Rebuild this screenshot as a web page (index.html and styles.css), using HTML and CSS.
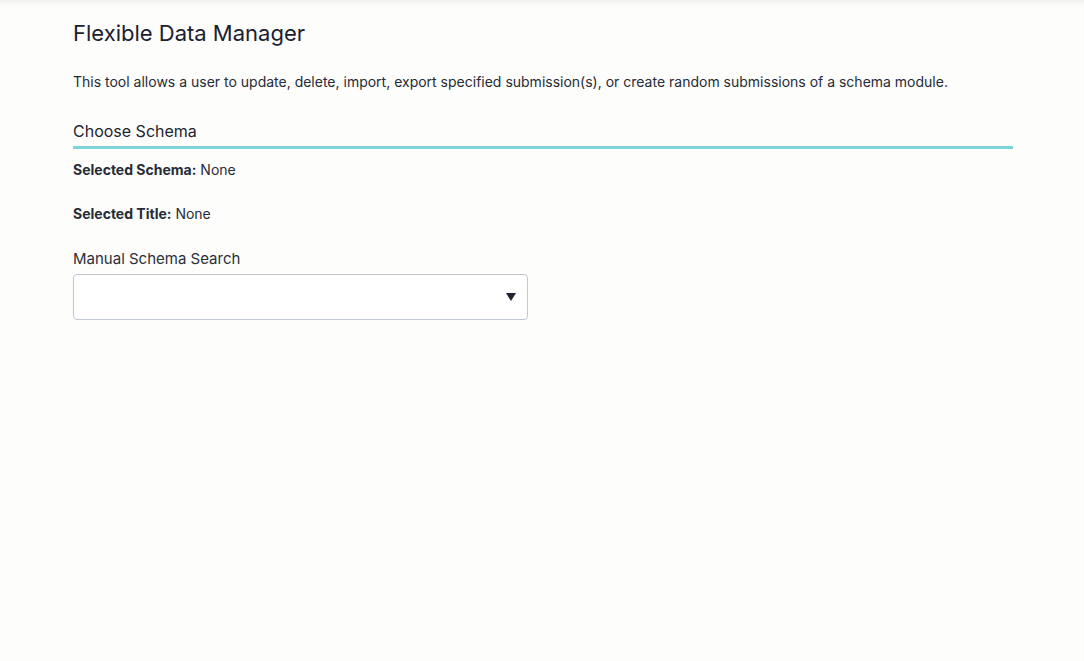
FILE: index.html
```html
<!DOCTYPE html>
<html>
<head>
<meta charset="utf-8">
<link rel="stylesheet" href="styles.css">
</head>
<body>
<div class="page">
  <main class="content">
    <h1 class="title">Flexible Data Manager</h1>
    <p class="desc">This tool allows a user to update, delete, import, export specified submission(s), or create random submissions of a schema module.</p>
    <h2 class="section">Choose Schema</h2>
    <p class="info"><b>Selected Schema:</b> None</p>
    <p class="info"><b>Selected Title:</b> None</p>
    <label class="field-label">Manual Schema Search</label>
    <div class="select">
      <svg class="caret" width="10" height="8" viewBox="0 0 10 8"><path d="M0 0H10L5 8Z" fill="#1f2430"/></svg>
    </div>
  </main>
</div>
</body>
</html>
```
FILE: styles.css
```css
html, body {
  margin: 0;
  padding: 0;
  height: 100%;
  background: #fdfdfc;
}
body {
  font-family: Inter, "Noto Sans", sans-serif;
  color: #222733;
}
.page {
  height: 100%;
  box-shadow: inset 0 6px 6px -4px rgba(0,0,0,0.06);
  border-top: 1px solid #eef0f2;
  box-sizing: border-box;
}
.content {
  width: 940px;
  margin-left: 73px;
  padding-top: 19px;
}
.title {
  margin: 0;
  font-size: 22px;
  font-weight: 400;
  line-height: 26px;
  color: #1b2030;
}
.desc {
  margin: 26px 0 0;
  font-size: 14px;
  line-height: 20px;
  color: #262b36;
}
.section {
  margin: 29px 0 0;
  font-size: 16px;
  font-weight: 400;
  line-height: 20px;
  padding-bottom: 5px;
  border-bottom: 3px solid #7cd3d9;
  color: #1f2430;
}
.info {
  margin: 11px 0 0;
  font-size: 14px;
  line-height: 20px;
  color: #262b36;
}
.info + .info {
  margin-top: 24px;
}
.info b {
  font-weight: 700;
}
.field-label {
  display: block;
  margin-top: 25px;
  font-size: 15px;
  line-height: 20px;
  color: #2a2f3a;
}
.select {
  margin-top: 5px;
  width: 455px;
  height: 46px;
  box-sizing: border-box;
  border: 1.5px solid #c0c7d1;
  border-radius: 4px;
  background: #fff;
  display: flex;
  align-items: center;
  justify-content: flex-end;
  padding-right: 11px;
}
.caret {
  display: block;
}
```
